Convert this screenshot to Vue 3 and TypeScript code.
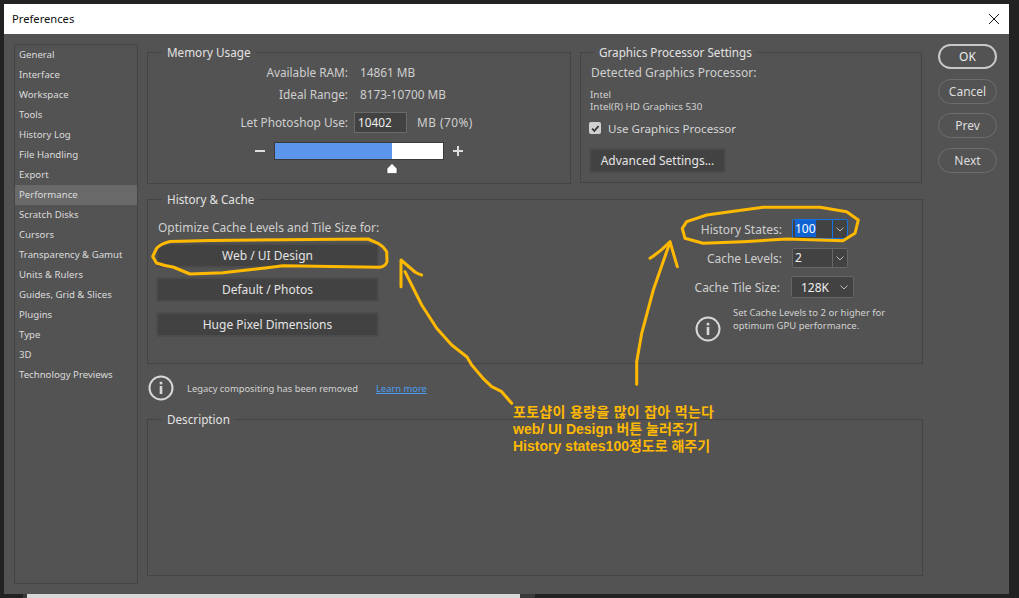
<script setup lang="ts">
const navItems: string[] = [
  'General', 'Interface', 'Workspace', 'Tools', 'History Log', 'File Handling', 'Export',
  'Performance', 'Scratch Disks', 'Cursors', 'Transparency & Gamut', 'Units & Rulers',
  'Guides, Grid & Slices', 'Plugins', 'Type', '3D', 'Technology Previews'
]
const actions: string[] = ['OK', 'Cancel', 'Prev', 'Next']
const presets: string[] = ['Web / UI Design', 'Default / Photos', 'Huge Pixel Dimensions']
</script>

<template>
  <div class="screen">
    <div class="dialog">
      <header class="titlebar">
        <span class="title">Preferences</span>
        <svg class="close" width="12" height="12" viewBox="0 0 12 12">
          <path d="M1 1l10 10M11 1L1 11" stroke="#111" stroke-width="1" fill="none" />
        </svg>
      </header>

      <div class="body">
        <nav class="sidebar">
          <div v-for="item in navItems" :key="item" class="nav-item" :class="{ active: item === 'Performance' }">{{ item }}</div>
        </nav>

        <main class="content">
          <div class="top-row">
            <fieldset class="group memory">
              <legend>Memory Usage</legend>
              <div class="mem-row"><span class="mem-label">Available RAM:</span><span>14861 MB</span></div>
              <div class="mem-row"><span class="mem-label">Ideal Range:</span><span>8173-10700 MB</span></div>
              <div class="mem-row use"><span class="mem-label">Let Photoshop Use:</span><span class="mem-input">10402</span><span class="mem-pct">MB (70%)</span></div>
              <div class="slider-row">
                <span class="pm minus"></span>
                <div class="slider">
                  <div class="slider-fill"></div>
                  <svg class="thumb" width="12" height="11" viewBox="0 0 12 11">
                    <path d="M6 .5L11 5.5V9.5Q11 10.5 10 10.5H2Q1 10.5 1 9.5V5.5Z" fill="#fff" stroke="#333" stroke-width=".6" />
                  </svg>
                </div>
                <span class="pm plus"></span>
              </div>
            </fieldset>

            <fieldset class="group gpu">
              <legend>Graphics Processor Settings</legend>
              <div class="gpu-label">Detected Graphics Processor:</div>
              <div class="gpu-name">Intel<br />Intel(R) HD Graphics 530</div>
              <label class="check-row">
                <span class="checkbox">
                  <svg width="9" height="9" viewBox="0 0 9 9"><path d="M1.2 4.6l2.2 2.4 4.2-5" stroke="#333" stroke-width="1.8" fill="none" /></svg>
                </span>
                Use Graphics Processor
              </label>
              <div class="btn advanced">Advanced Settings...</div>
            </fieldset>
          </div>

          <fieldset class="group history">
            <legend>History &amp; Cache</legend>
            <div class="history-left">
              <div class="opt-label">Optimize Cache Levels and Tile Size for:</div>
              <div v-for="p in presets" :key="p" class="btn preset">{{ p }}</div>
            </div>
            <div class="history-right">
              <div class="combo-row">
                <span class="combo-label">History States:</span>
                <div class="combo focus">
                  <span class="combo-value"><span class="selected">100</span></span>
                  <span class="combo-arrow"><svg width="8" height="5" viewBox="0 0 8 5"><path d="M.5.5L4 4 7.5.5" stroke="#bbb" fill="none" /></svg></span>
                </div>
              </div>
              <div class="combo-row">
                <span class="combo-label">Cache Levels:</span>
                <div class="combo">
                  <span class="combo-value">2</span>
                  <span class="combo-arrow"><svg width="8" height="5" viewBox="0 0 8 5"><path d="M.5.5L4 4 7.5.5" stroke="#bbb" fill="none" /></svg></span>
                </div>
              </div>
              <div class="combo-row tile">
                <span class="combo-label">Cache Tile Size:</span>
                <div class="select">
                  <span>128K</span>
                  <svg width="8" height="5" viewBox="0 0 8 5"><path d="M.5.5L4 4 7.5.5" stroke="#bbb" fill="none" /></svg>
                </div>
              </div>
              <div class="hint">
                <svg class="info" width="26" height="26" viewBox="0 0 26 26">
                  <circle cx="13" cy="13" r="11.5" stroke="#d8d8d8" stroke-width="2" fill="none" />
                  <rect x="11.7" y="11" width="2.6" height="8" fill="#d8d8d8" />
                  <rect x="11.7" y="6.8" width="2.6" height="2.6" fill="#d8d8d8" />
                </svg>
                <p>Set Cache Levels to 2 or higher for<br />optimum GPU performance.</p>
              </div>
            </div>
          </fieldset>

          <div class="notice">
            <svg class="info" width="26" height="26" viewBox="0 0 26 26">
              <circle cx="13" cy="13" r="11.5" stroke="#d8d8d8" stroke-width="2" fill="none" />
              <rect x="11.7" y="11" width="2.6" height="8" fill="#d8d8d8" />
              <rect x="11.7" y="6.8" width="2.6" height="2.6" fill="#d8d8d8" />
            </svg>
            <span class="notice-text">Legacy compositing has been removed</span>
            <a class="learn">Learn more</a>
          </div>

          <fieldset class="group description">
            <legend>Description</legend>
          </fieldset>
        </main>

        <aside class="actions">
          <div v-for="a in actions" :key="a" class="pill" :class="{ primary: a === 'OK' }">{{ a }}</div>
        </aside>
      </div>
    </div>

    <div class="under-strip"></div>

    <!-- hand drawn markup on top of the screenshot -->
    <svg class="markup" width="1019" height="598" viewBox="0 0 1019 598">
      <g fill="none" stroke="#ffb900" stroke-width="3" stroke-linecap="round" stroke-linejoin="round">
        <path d="M368 239L310 239.5L210 240.5L170 241.5Q160 244 156.5 248.5L152.7 256.5L156.5 263Q165 266 173 267L190 274L223 272.7L263 268.3L283 265.7L380 267.3Q386 266 387 261.5L386.7 251.7Q383 246 378 243.3Z" />
        <path d="M511.7 403.3L501.7 391.7L491.7 386.7L483 378.3L471.7 365L467 357L451.7 345L436.7 328.3L421.7 305L405 271.7" />
        <path d="M401 286.7V260L415 272Q418 274 421.7 275" />
        <path d="M636.7 384.3V361.7L641.7 333.3L653.3 290L669 245" />
        <path d="M650 258.3Q660 252 670 241.7L677.3 266.7" />
        <path d="M706.7 215L730 211.7L763.3 207.3L820 207.3L846.7 211.7L858.3 220L855 233.3L843 240.7L786.7 239L743 241.7L703 243.3L685 238.3L682.3 228.3L686.7 221.7Z" />
      </g>
    </svg>
    <div class="note">
      <div class="note-first">포토샵이 용량을 많이 잡아 먹는다</div>
      <div>web/ UI Design 버튼 눌러주기</div>
      <div>History states100정도로 해주기</div>
    </div>
  </div>
</template>

<style>
html, body {
  margin: 0;
  background: #222;
  overflow: hidden;
}
</style>

<style scoped>
.screen {
  position: relative;
  width: 1019px;
  height: 598px;
  padding: 4px 10px 0 4px;
  box-sizing: border-box;
  background: #222;
  font-family: "Noto Sans", "Noto Sans CJK KR", sans-serif;
  font-size: 12px;
  color: #d6d6d6;
  overflow: hidden;
}

.dialog {
  height: 590px;
  background: #535353;
  display: flex;
  flex-direction: column;
}

.titlebar {
  height: 30px;
  flex: none;
  background: #fff;
  display: flex;
  align-items: center;
  justify-content: space-between;
  padding: 0 9px 1px 8px;
  box-sizing: border-box;
}

.title {
  color: #111;
  font-size: 11.2px;
}

.body {
  flex: 1;
  display: flex;
  padding: 10px 12px 10px 10px;
}

.sidebar {
  width: 122px;
  flex: none;
  height: 538px;
  border: 1px solid #444;
}

.nav-item {
  height: 20px;
  line-height: 19px;
  padding-left: 4px;
  font-size: 9.65px;
  color: #dcdcdc;
}

.nav-item.active {
  background: #696969;
}

.content {
  width: 776px;
  margin-left: 9px;
  flex: none;
}

.actions {
  margin-left: 15px;
  width: 60px;
  display: flex;
  flex-direction: column;
  align-items: stretch;
}

.pill {
  height: 25px;
  box-sizing: border-box;
  border: 1px solid #6e6e6e;
  border-radius: 13px;
  margin-bottom: 9.5px;
  display: flex;
  align-items: center;
  justify-content: center;
  color: #dedede;
}

.pill.primary {
  border: 2px solid #c8c8c8;
  color: #eee;
}

.group {
  margin: 0;
  padding: 0;
  border: 1px solid #444;
  box-sizing: border-box;
  min-width: 0;
}

.group legend {
  margin-left: 14px;
  padding: 0 5px;
  font-size: 11.7px;
  line-height: 16px;
  color: #e2e2e2;
}

.top-row {
  display: flex;
  gap: 9px;
  align-items: flex-start;
}

.memory {
  width: 424px;
  height: 140px;
}

.mem-row {
  display: flex;
  align-items: center;
  height: 22px;
  font-size: 11.8px;
  color: #cfcfcf;
}

.mem-row:nth-of-type(1) {
  margin-top: 1px;
}

.mem-label {
  width: 212px;
  padding-right: 12px;
  box-sizing: border-box;
  text-align: right;
}

.mem-row.use {
  height: 24px;
  margin-top: 5px;
}

.mem-input {
  width: 53px;
  height: 21px;
  margin-left: -6px;
  box-sizing: border-box;
  border: 1px solid #6a6a6a;
  background: #424242;
  padding-left: 3px;
  line-height: 19px;
  color: #eee;
}

.mem-pct {
  margin-left: 10px;
  letter-spacing: .5px;
}

.slider-row {
  display: flex;
  align-items: center;
  margin-top: 8px;
  padding-left: 107px;
}

.pm {
  position: relative;
  width: 10px;
  height: 10px;
  flex: none;
}

.pm::before {
  content: '';
  position: absolute;
  left: 0;
  right: 0;
  top: 4px;
  height: 2px;
  background: #ddd;
}

.plus::after {
  content: '';
  position: absolute;
  top: 0;
  bottom: 0;
  left: 4px;
  width: 2px;
  background: #ddd;
}

.slider {
  position: relative;
  width: 170px;
  height: 18px;
  box-sizing: border-box;
  margin: 0 9px;
  border: 1px solid #3a3a3a;
  background: #fff;
}

.slider-fill {
  width: 117px;
  height: 100%;
  background: #5b96ec;
}

.thumb {
  position: absolute;
  left: 111px;
  top: 20px;
}

.gpu {
  width: 342px;
  height: 139px;
  padding-left: 10px;
}

.gpu legend {
  margin-left: 3px;
}

.gpu-label {
  line-height: 16px;
  margin-top: 5px;
  color: #cfcfcf;
}

.gpu-name {
  margin-top: 8px;
  margin-left: -1px;
  font-size: 9.8px;
  line-height: 12px;
  color: #d2d2d2;
}

.check-row {
  display: flex;
  align-items: center;
  gap: 7px;
  margin-top: 6px;
  height: 18px;
  font-size: 11.6px;
  color: #d6d6d6;
  margin-left: -2px;
}

.checkbox {
  width: 12px;
  height: 12px;
  background: #d0d0d0;
  border-radius: 2px;
  display: flex;
  align-items: center;
  justify-content: center;
}

.btn {
  box-sizing: border-box;
  background: #424242;
  border: 2px solid #4c4c4c;
  border-radius: 2px;
  display: flex;
  align-items: center;
  justify-content: center;
  color: #e4e4e4;
}

.advanced {
  width: 137px;
  height: 25px;
  margin-top: 11px;
  margin-left: -2px;
}

.history {
  width: 776px;
  height: 173px;
  margin-top: 7px;
}

.history-left {
  float: left;
  width: 240px;
  padding-left: 8px;
}

.opt-label {
  line-height: 16px;
  margin: 13px 0 7px 2px;
  color: #cfcfcf;
}

.preset {
  height: 25px;
  width: 223px;
  margin-bottom: 10px;
}

.preset:nth-of-type(2) {
  margin-bottom: 9px;
}

.history-right {
  float: right;
  width: 240px;
  padding-top: 11px;
}

.combo-row {
  display: flex;
  align-items: center;
  height: 22px;
  margin-bottom: 7px;
  color: #cfcfcf;
}

.combo-label {
  width: 100px;
  text-align: right;
  margin-right: 10px;
}

.combo {
  display: flex;
  width: 56px;
  height: 20px;
  box-sizing: border-box;
  border: 1px solid #666;
  border-radius: 2px;
  background: #424242;
  color: #eee;
}

.combo.focus {
  border-color: #1473e6;
}

.combo-value {
  width: 40px;
  padding-left: 2px;
  line-height: 18px;
  border-right: 1px solid #666;
  box-sizing: border-box;
}

.focus .combo-value {
  border-right-color: #1473e6;
}

.selected {
  background: #0f64d2;
  color: #fff;
}

.combo-arrow {
  flex: 1;
  display: flex;
  align-items: center;
  justify-content: center;
}

.combo-row.tile .combo-label {
  width: 98px;
  margin-right: 11px;
}

.select {
  width: 63px;
  height: 22px;
  box-sizing: border-box;
  border: 1px solid #666;
  border-radius: 2px;
  background: #424242;
  display: flex;
  align-items: center;
  justify-content: space-between;
  padding: 0 5px 0 9px;
  color: #eee;
}

.hint {
  display: flex;
  align-items: flex-start;
  gap: 12px;
  margin-left: 13px;
  margin-top: 0;
}

.hint .info {
  margin-top: 11px;
}

.hint p {
  margin: 1px 0 0;
  font-size: 9.5px;
  line-height: 13px;
  color: #d2d2d2;
}

.notice {
  display: flex;
  align-items: center;
  height: 26px;
  margin-top: 11px;
  padding-left: 1px;
}

.notice-text {
  margin-left: 13px;
  font-size: 9.35px;
  color: #d2d2d2;
}

.learn {
  margin-left: 18px;
  font-size: 9.35px;
  color: #4b9cf0;
  text-decoration: underline;
}

.description {
  height: 165px;
  margin-top: 10px;
}

.under-strip {
  height: 4px;
  margin-left: 19px;
  width: 493px;
  background: #d8d8d8;
  border-left: 4px solid #3a3a3a;
  border-right: 15px solid #3a3a3a;
}

.markup {
  position: absolute;
  left: 0;
  top: 0;
  pointer-events: none;
}

.note {
  position: absolute;
  left: 513px;
  top: 404px;
  font-family: "Liberation Sans", "Noto Sans CJK KR", sans-serif;
  font-size: 14px;
  line-height: 17px;
  font-weight: 700;
  color: #ffb900;
  white-space: nowrap;
}

.note-first {
  letter-spacing: .3px;
}
</style>
